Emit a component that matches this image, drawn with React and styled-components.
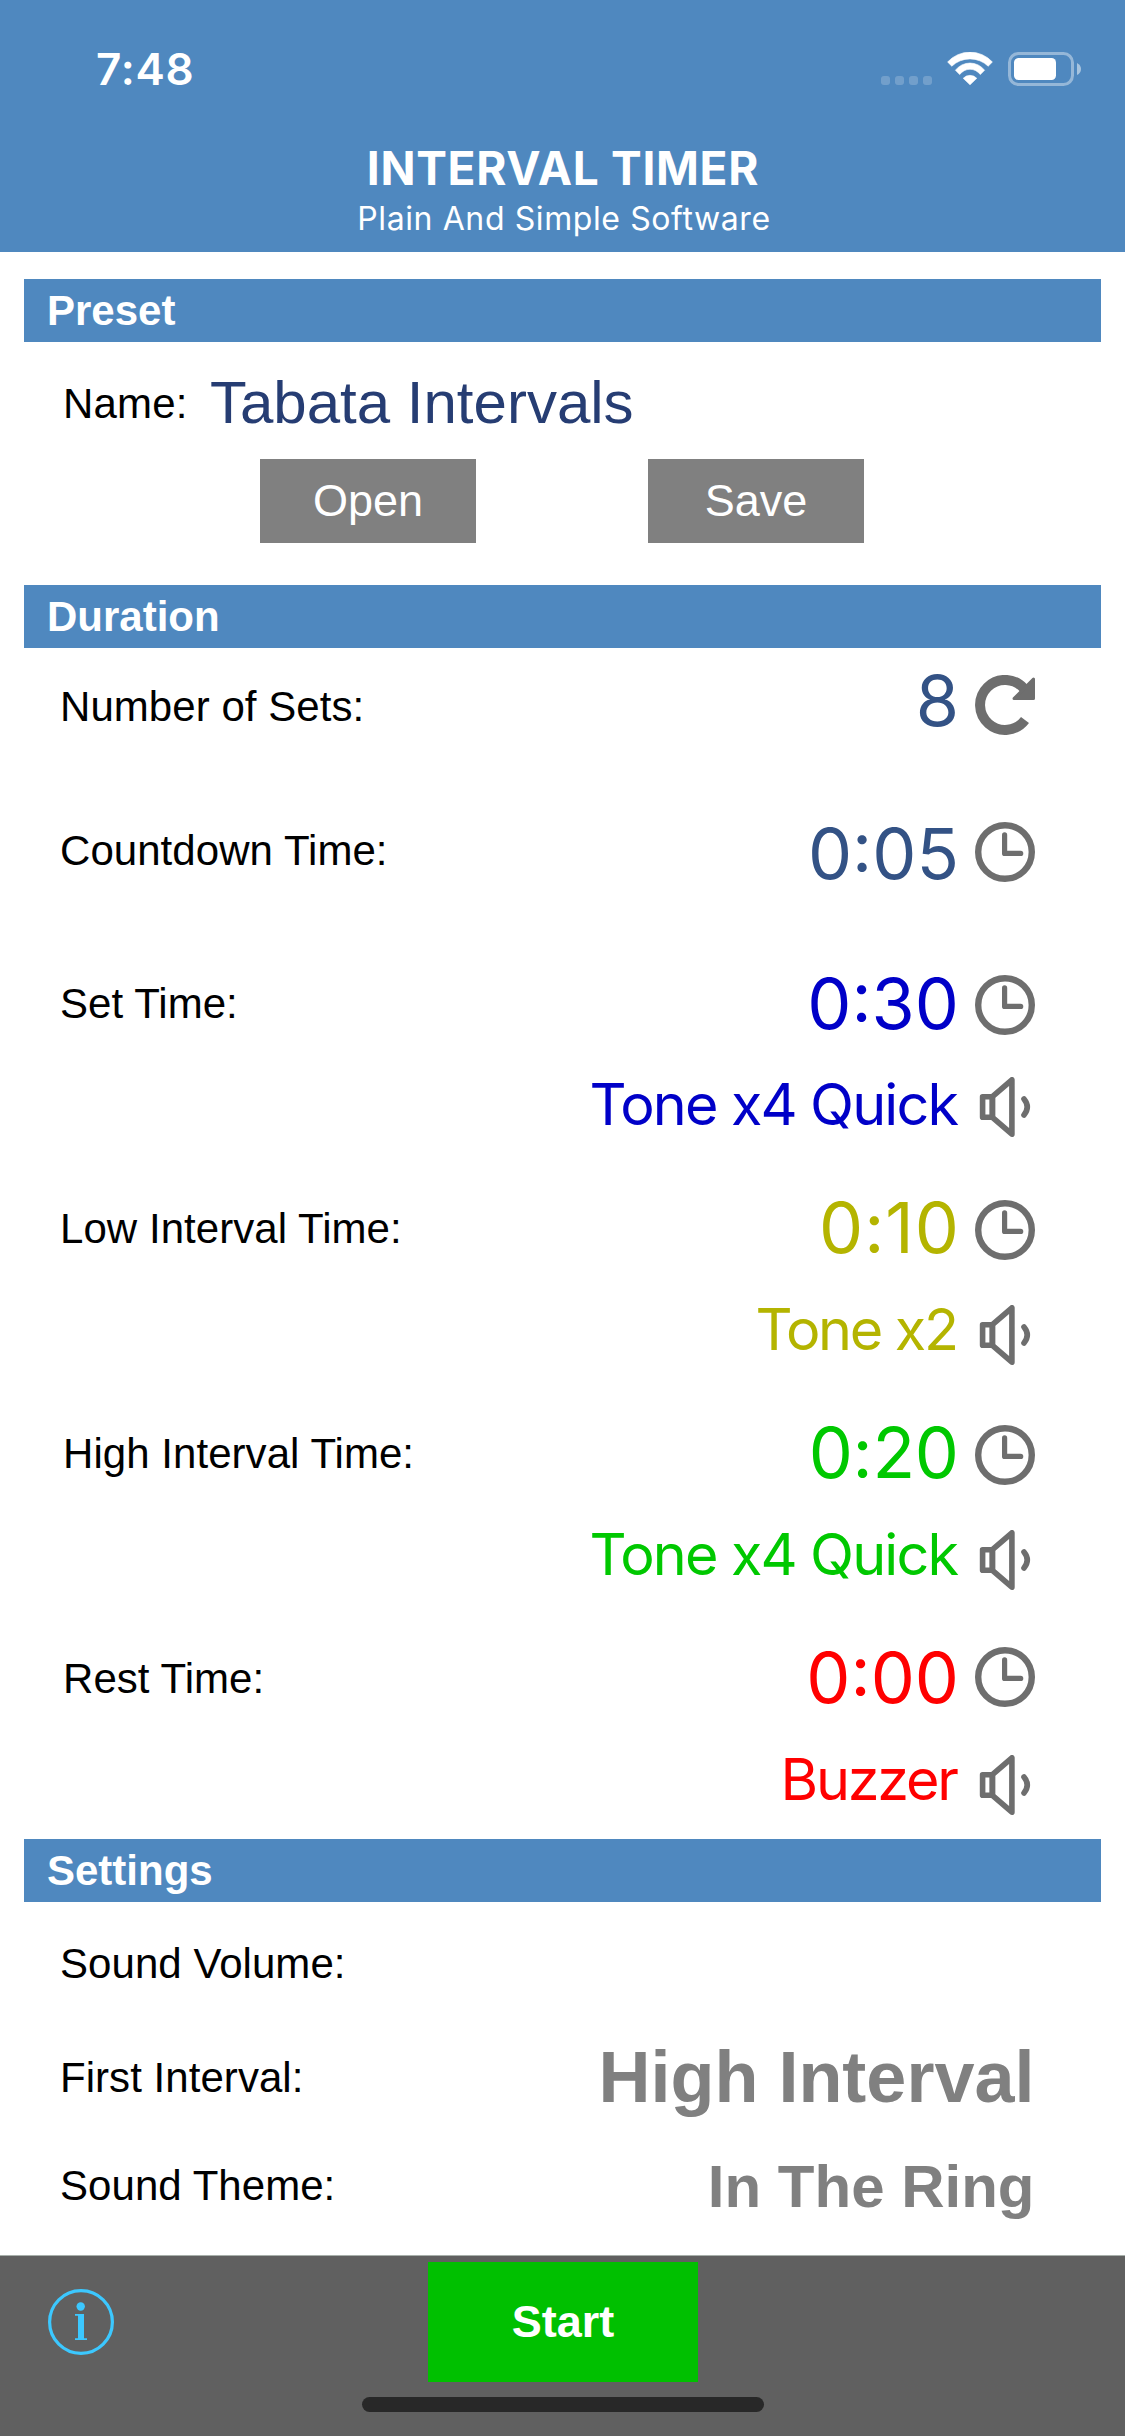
import React from "react";
import styled, { createGlobalStyle } from "styled-components";

const HELVETICA = '"Liberation Sans", Arial, Helvetica, sans-serif';
const SYSTEM = 'Inter, Roboto, sans-serif';
const BLUE = "#4f88bf";
const ICON = "#6e6e6e";

const GlobalStyle = createGlobalStyle`
  body { margin: 0; background: #fff; }
  *, *::before, *::after { box-sizing: border-box; }
`;

const Screen = styled.div`
  display: flex;
  flex-direction: column;
  width: 1125px;
  height: 2436px;
  overflow: hidden;
  background: #fff;
  color: #000;
  font-family: ${HELVETICA};
  white-space: nowrap;
`;

const Header = styled.header`
  height: 252px;
  background: ${BLUE};
  color: #fff;
  font-family: ${SYSTEM};
  text-align: center;
`;

const StatusBar = styled.div`
  display: flex;
  justify-content: space-between;
  align-items: flex-start;
  height: 140px;
  padding: 42px 43px 0 96px;
`;

const Clock = styled.span`
  font-size: 44px;
  line-height: 54px;
  font-weight: 600;
  letter-spacing: 0.8px;
`;

const StatusIcons = styled.div`
  display: flex;
  align-items: flex-start;
  padding-top: 10px;
`;

const SignalDots = styled.div`
  display: flex;
  gap: 5px;
  margin: 24px 15px 0 0;
`;

const SignalDot = styled.span`
  width: 9px;
  height: 9px;
  border-radius: 3px;
  background: rgba(255, 255, 255, 0.2);
`;

const Title = styled.h1`
  margin: 0;
  padding-left: 1px;
  font-size: 46px;
  line-height: 56px;
  font-weight: 700;
  letter-spacing: 0.7px;
`;

const Subtitle = styled.p`
  margin: 3px 0 0;
  font-size: 32px;
  line-height: 40px;
  letter-spacing: 0.6px;
  padding-left: 3px;
`;

const SectionBar = styled.h2`
  flex: none;
  height: 63px;
  margin: ${(p) => p.$top}px 24px 0;
  padding-left: 23px;
  background: ${BLUE};
  color: #fff;
  font-size: 42px;
  line-height: 63px;
  font-weight: 700;
`;

const NameRow = styled.div`
  display: flex;
  align-items: flex-start;
  height: 117px;
  padding: 21px 0 0 63px;
`;

const NameLabel = styled.label`
  width: 147px;
  margin-top: 9px;
  font-size: 42px;
  line-height: 63px;
  letter-spacing: 0.2px;
`;

const NameValue = styled.span`
  color: #263d73;
  font-size: 60px;
  line-height: 80px;
`;

const ButtonRow = styled.div`
  display: flex;
  gap: 172px;
  padding-left: 260px;
`;

const Button = styled.button`
  width: 216px;
  height: 84px;
  padding: 0;
  border: 0;
  background: #808080;
  color: #fff;
  font: 45px/84px ${HELVETICA};
`;

const Row = styled.div`
  display: flex;
  align-items: flex-start;
  flex: none;
  height: 60px;
  margin-top: ${(p) => p.$gap}px;
  padding: 0 90px 0 ${(p) => p.$indent || 60}px;
`;

const Label = styled.span`
  margin-top: ${(p) => p.$shift || 0}px;
  font-size: 42px;
  line-height: 60px;
  letter-spacing: 0.05px;
`;

/* The right margin also absorbs the tracking after the last glyph. */
const Value = styled.span`
  margin: ${(p) => p.$shift || 0}px ${(p) => 16 - (p.$track || 0)}px 0 auto;
  color: ${(p) => p.$color};
  font-family: ${SYSTEM};
  font-size: ${(p) => (p.$sound ? 57.5 : 70)}px;
  line-height: 60px;
  letter-spacing: ${(p) => p.$track || 0}px;
`;

const Choice = styled.span`
  margin: ${(p) => p.$shift || 0}px 0.5px 0 auto;
  color: #808080;
  font-size: ${(p) => p.$size}px;
  line-height: 60px;
  font-weight: 700;
`;

const IconBox = styled.svg`
  display: block;
  flex: none;
  width: 60px;
  height: 60px;
  fill: none;
  stroke: ${ICON};
  stroke-linecap: round;
  stroke-linejoin: round;
`;

const Footer = styled.footer`
  display: grid;
  grid-template-columns: 428px 270px 1fr;
  grid-template-rows: 126px 1fr;
  height: 181px;
  margin-top: 40px;
  border-top: 1px solid #a8b0ab;
  background: #606060;
`;

const InfoButton = styled.svg`
  width: 66px;
  height: 66px;
  margin: 33px 0 0 48px;
`;

const StartButton = styled.button`
  height: 120px;
  margin-top: 6px;
  padding: 0;
  border: 0;
  background: #00c000;
  color: #fff;
  font: 700 45px/120px ${HELVETICA};
`;

const HomeIndicator = styled.div`
  grid-column: 1 / -1;
  justify-self: center;
  width: 402px;
  height: 15px;
  margin-top: 15px;
  border-radius: 8px;
  background: #282828;
`;

const Wifi = styled.svg`
  width: 46px;
  height: 34px;
  margin-right: 15px;
`;

const WifiIcon = () => (
  <Wifi viewBox="0 0 46 34" fill="#fff" stroke="#fff" strokeWidth="0.6" strokeLinejoin="round">
    <path d="M.6 10A30.3 30.3 0 0 1 45.4 10L41.2 14.2A26.3 26.3 0 0 0 4.8 14.2Z" />
    <path d="M8.4 18.2A18.5 18.5 0 0 1 37.6 18.2L33.3 22.6A12.6 12.6 0 0 0 12.7 22.6Z" />
    <path d="M16.2 26.3A9.3 9.3 0 0 1 29.8 26.3L23 32.8Z" />
  </Wifi>
);

const BatteryIcon = () => (
  <svg width="74" height="34" viewBox="0 0 74 34">
    <rect x="1.5" y="1.5" width="63" height="31" rx="9" fill="none" stroke="#fff" strokeOpacity="0.4" strokeWidth="3" />
    <rect x="6" y="6" width="42" height="22" rx="4.5" fill="#fff" />
    <path d="M69 11Q73 13 73 17Q73 21 69 23Z" fill="#fff" fillOpacity="0.5" />
  </svg>
);

const RepeatIcon = () => (
  <IconBox viewBox="0 0 60 60">
    <path d="M50 45A25 25 0 1 1 49 13.6" strokeWidth="10" strokeLinecap="butt" />
    <path d="M58.5 4V23.5H39Z" fill={ICON} strokeWidth="3" />
  </IconBox>
);

const TimeIcon = () => (
  <IconBox viewBox="0 0 60 60">
    <circle cx="30" cy="30" r="26.8" strokeWidth="6.4" />
    <path d="M29.6 12.9V31.4H45.7" strokeWidth="5.2" />
  </IconBox>
);

const SpeakerIcon = () => (
  <IconBox viewBox="0 0 60 60" strokeWidth="5.6">
    <path d="M7.6 19.7H17.4V40.3H7.6Z" />
    <path d="M17.4 19.7L36.9 2.8V57.2L17.4 40.3Z" />
    <path d="M49 22Q55.5 30 49 38" />
  </IconBox>
);

const ROWS = [
  { label: "Number of Sets:", value: "8", color: "#335285", gap: 27, labelShift: 2, shift: -4, Icon: RepeatIcon },
  { label: "Countdown Time:", value: "0:05", color: "#335285", gap: 87, labelShift: -1, shift: 2, Icon: TimeIcon },
  { label: "Set Time:", value: "0:30", color: "#0000c8", gap: 93, labelShift: -1, shift: -1, Icon: TimeIcon },
  { value: "Tone x4 Quick", color: "#0000c8", gap: 42, shift: -3, track: -1.85, sound: true, Icon: SpeakerIcon },
  { label: "Low Interval Time:", value: "0:10", color: "#b4b400", gap: 63, labelShift: -1, shift: -2, track: 1, Icon: TimeIcon },
  { value: "Tone x2", color: "#b4b400", gap: 45, shift: -6, track: -2.3, sound: true, Icon: SpeakerIcon },
  { label: "High Interval Time:", value: "0:20", color: "#00c800", gap: 60, indent: 63, labelShift: -1, shift: -2, track: -0.3, Icon: TimeIcon },
  { value: "Tone x4 Quick", color: "#00c800", gap: 45, shift: -6, track: -1.85, sound: true, Icon: SpeakerIcon },
  { label: "Rest Time:", value: "0:00", color: "#ff0000", gap: 57, indent: 63, labelShift: 2, shift: 1, Icon: TimeIcon },
  { value: "Buzzer", color: "#ff0000", gap: 48, shift: -6, track: -2.2, sound: true, Icon: SpeakerIcon },
];

export default function App() {
  return (
    <Screen>
      <GlobalStyle />
      <Header>
        <StatusBar>
          <Clock>7:48</Clock>
          <StatusIcons>
            <SignalDots>
              <SignalDot />
              <SignalDot />
              <SignalDot />
              <SignalDot />
            </SignalDots>
            <WifiIcon />
            <BatteryIcon />
          </StatusIcons>
        </StatusBar>
        <Title>INTERVAL TIMER</Title>
        <Subtitle>Plain And Simple Software</Subtitle>
      </Header>

      <SectionBar $top={27}>Preset</SectionBar>
      <NameRow>
        <NameLabel>Name:</NameLabel>
        <NameValue>Tabata Intervals</NameValue>
      </NameRow>
      <ButtonRow>
        <Button>Open</Button>
        <Button>Save</Button>
      </ButtonRow>

      <SectionBar $top={42}>Duration</SectionBar>
      {ROWS.map(({ label, value, color, gap, indent, labelShift, shift, track, sound, Icon }, i) => (
        <Row key={i} $gap={gap} $indent={indent}>
          {label && <Label $shift={labelShift}>{label}</Label>}
          <Value $color={color} $shift={shift} $track={track} $sound={sound}>{value}</Value>
          <Icon />
        </Row>
      ))}

      <SectionBar $top={24}>Settings</SectionBar>
      <Row $gap={31}>
        <Label $shift={1}>Sound Volume:</Label>
      </Row>
      <Row $gap={54}>
        <Label $shift={1}>First Interval:</Label>
        <Choice $size={72}>High Interval</Choice>
      </Row>
      <Row $gap={48}>
        <Label $shift={1}>Sound Theme:</Label>
        <Choice $size={60} $shift={2}>In The Ring</Choice>
      </Row>

      <Footer>
        <InfoButton viewBox="0 0 66 66">
          <circle cx="33" cy="33" r="31.4" fill="none" stroke="#3cc8ff" strokeWidth="3.2" />
          <circle cx="32.7" cy="17.5" r="4.2" fill="#3cc8ff" />
          <path d="M27 25H36V49.3H39V51H27V49.3H30V26.7H27Z" fill="#3cc8ff" />
        </InfoButton>
        <StartButton>Start</StartButton>
        <HomeIndicator />
      </Footer>
    </Screen>
  );
}
